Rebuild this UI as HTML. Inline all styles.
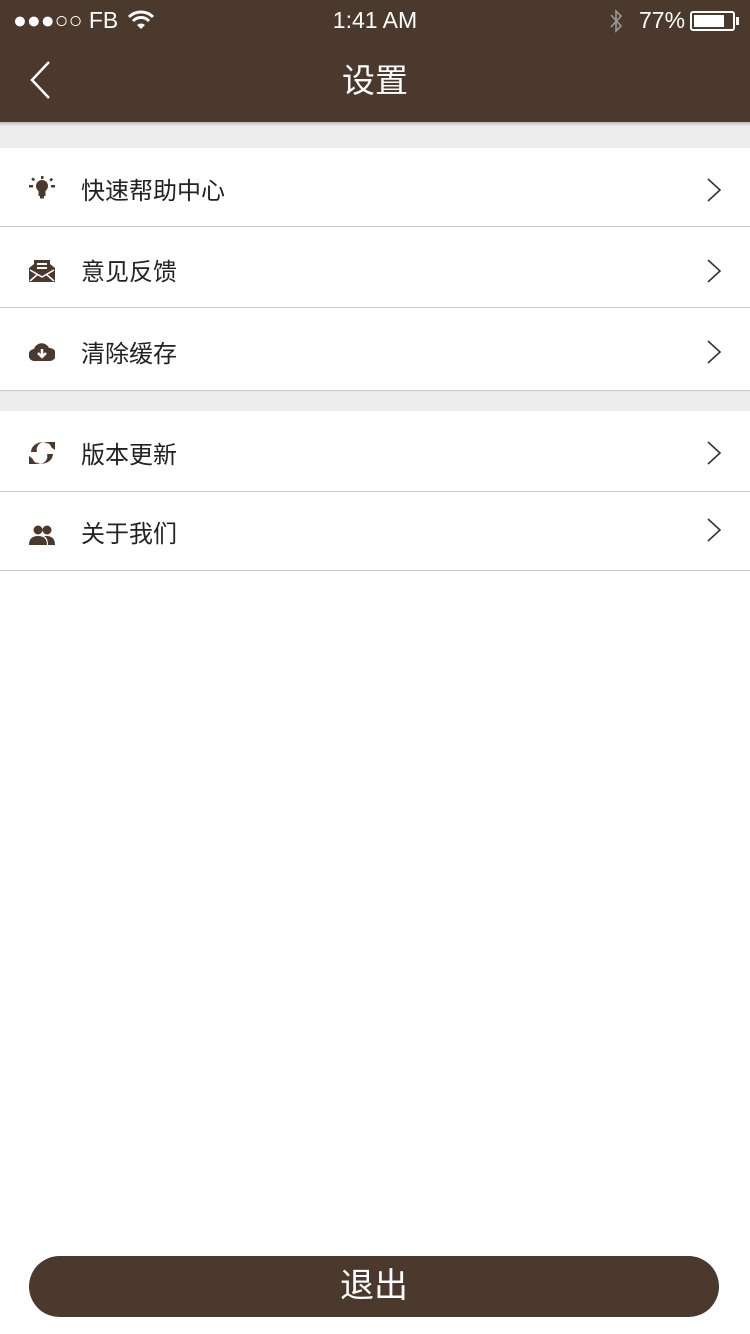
<!DOCTYPE html>
<html><head><meta charset="utf-8"><style>
*{margin:0;padding:0;box-sizing:border-box}
body{width:750px;height:1334px;background:#fff;position:relative;font-family:"Liberation Sans","Noto Sans CJK SC",sans-serif;overflow:hidden}
.hdr{position:absolute;left:0;top:0;width:750px;height:122px;background:#4a392c}
.sb{position:absolute;top:7px;color:#fff;font-size:23px}
.title{position:absolute;top:54px;width:750px;text-align:center;color:#fff;font-size:33px}
.shadow{position:absolute;top:122px;left:0;width:750px;height:4px;background:linear-gradient(#bbb,#ededed)}
.gray{position:absolute;left:0;width:750px;background:#ededed}
.row{position:absolute;left:0;width:750px;background:#fff;border-bottom:1px solid #c8c8c8}
.row .t{position:absolute;left:81px;font-size:24px;color:#222}
.row svg.ic{position:absolute;left:29px}
.row .ch{position:absolute;right:28px}
.btn{position:absolute;left:29px;top:1256px;width:690px;height:61px;border-radius:31px;background:#4a392c;color:#fff;font-size:34px;text-align:center;line-height:61px}
</style></head><body>
<div class="hdr">
<div class="sb" style="left:13px">●●●○○ FB</div>
<svg style="position:absolute;left:128px;top:10px" width="26" height="20" viewBox="0 0 26 20"><path d="M1 7 A17 17 0 0 1 25 7" stroke="#fff" stroke-width="3" fill="none"/><path d="M5 11 A11 11 0 0 1 21 11" stroke="#fff" stroke-width="3" fill="none"/><path d="M9 15 L13 19 L17 15 A6 6 0 0 0 9 15Z" fill="#fff"/></svg>
<div class="sb" style="left:0;width:750px;text-align:center">1:41 AM</div>
<svg style="position:absolute;left:609px;top:9px" width="14" height="25" viewBox="0 0 14 25"><path d="M2 6 L12 17 L7 22 L7 2 L12 7 L2 18" stroke="#999" stroke-width="1.6" fill="none"/></svg>
<div class="sb" style="left:639px">77%</div>
<div style="position:absolute;left:690px;top:11px;width:45px;height:20px;border:2px solid #fff;border-radius:3px"><div style="margin:2px;width:30px;height:12px;background:#fff"></div></div>
<div style="position:absolute;left:736px;top:17px;width:3px;height:8px;background:#fff"></div>
<svg style="position:absolute;left:28px;top:60px" width="24" height="40" viewBox="0 0 24 40"><path d="M21 2 L4 20 L21 38" stroke="#fff" stroke-width="2.5" fill="none"/></svg>
<div class="title">设置</div>
</div>
<div class="gray" style="top:122px;height:26px"></div>
<div class="shadow"></div>

<div class="row" style="top:148px;height:79px">
<svg class="ic" style="top:28px" width="26" height="24" viewBox="0 0 26 24"><circle cx="13" cy="10" r="6" fill="#4a392c"/><rect x="9.5" y="14" width="7" height="6" fill="#4a392c"/><rect x="11" y="20" width="4" height="2.5" fill="#4a392c"/><rect x="12" y="0" width="2.5" height="3" fill="#4a392c"/><rect x="0" y="9" width="4" height="2.5" fill="#4a392c"/><rect x="22" y="9" width="4" height="2.5" fill="#4a392c"/><rect x="3" y="2" width="2.5" height="3" transform="rotate(-45 4 3.5)" fill="#4a392c"/><rect x="21" y="2" width="2.5" height="3" transform="rotate(45 22 3.5)" fill="#4a392c"/></svg>
<div class="t" style="top:23px">快速帮助中心</div>
<svg class="ch" style="top:29px" width="16" height="26" viewBox="0 0 16 26"><path d="M2 2 L14 13 L2 24" stroke="#333" stroke-width="1.6" fill="none"/></svg>
</div>
<div class="row" style="top:227px;height:81px">
<svg class="ic" style="top:33px" width="26" height="22" viewBox="0 0 26 22"><path d="M0 8 L5 4 V0 H21 V4 L26 8 V22 H0Z" fill="#4a392c"/><rect x="8" y="3" width="10" height="2" fill="#fff"/><rect x="8" y="7" width="10" height="2" fill="#fff"/><path d="M1 10 L13 17 L25 10 M1 21 L9 14 M25 21 L17 14" stroke="#fff" stroke-width="1.5" fill="none"/></svg>
<div class="t" style="top:25px">意见反馈</div>
<svg class="ch" style="top:31px" width="16" height="26" viewBox="0 0 16 26"><path d="M2 2 L14 13 L2 24" stroke="#333" stroke-width="1.6" fill="none"/></svg>
</div>
<div class="row" style="top:308px;height:83px">
<svg class="ic" style="top:35px" width="26" height="18" viewBox="0 0 26 18"><path d="M6 18 A6 6 0 0 1 5 6 A8 8 0 0 1 20 5 A6.5 6.5 0 0 1 21 18Z" fill="#4a392c"/><path d="M13 6 V13 M9 10 L13 14 L17 10" stroke="#fff" stroke-width="2.5" fill="none"/></svg>
<div class="t" style="top:26px">清除缓存</div>
<svg class="ch" style="top:31px" width="16" height="26" viewBox="0 0 16 26"><path d="M2 2 L14 13 L2 24" stroke="#333" stroke-width="1.6" fill="none"/></svg>
</div>
<div class="gray" style="top:391px;height:20px"></div>
<div class="row" style="top:411px;height:81px">
<svg class="ic" style="top:29px" width="26" height="26" viewBox="0 0 26 26"><path d="M2 12 A11 10 0 0 1 19 4 L17 2 H26 V10 L22.5 7.5 A7 7 0 0 0 8 12Z" fill="#4a392c"/><path d="M24 14 A11 10 0 0 1 7 22 L9 24 H0 V16 L3.5 18.5 A7 7 0 0 0 18 14Z" fill="#4a392c"/></svg>
<div class="t" style="top:24px">版本更新</div>
<svg class="ch" style="top:29px" width="16" height="26" viewBox="0 0 16 26"><path d="M2 2 L14 13 L2 24" stroke="#333" stroke-width="1.6" fill="none"/></svg>
</div>
<div class="row" style="top:492px;height:79px">
<svg class="ic" style="top:33px" width="26" height="20" viewBox="0 0 26 20"><circle cx="9" cy="5" r="4.5" fill="#4a392c"/><circle cx="18" cy="5" r="4.5" fill="#4a392c"/><path d="M0 20 Q0 11 9 11 Q18 11 18 20Z" fill="#4a392c"/><path d="M15 11 Q26 10 26 20 H19 Q19 13 15 11Z" fill="#4a392c"/></svg>
<div class="t" style="top:22px">关于我们</div>
<svg class="ch" style="top:25px" width="16" height="26" viewBox="0 0 16 26"><path d="M2 2 L14 13 L2 24" stroke="#333" stroke-width="1.6" fill="none"/></svg>
</div>
<div class="btn">退出</div>
</body></html>
